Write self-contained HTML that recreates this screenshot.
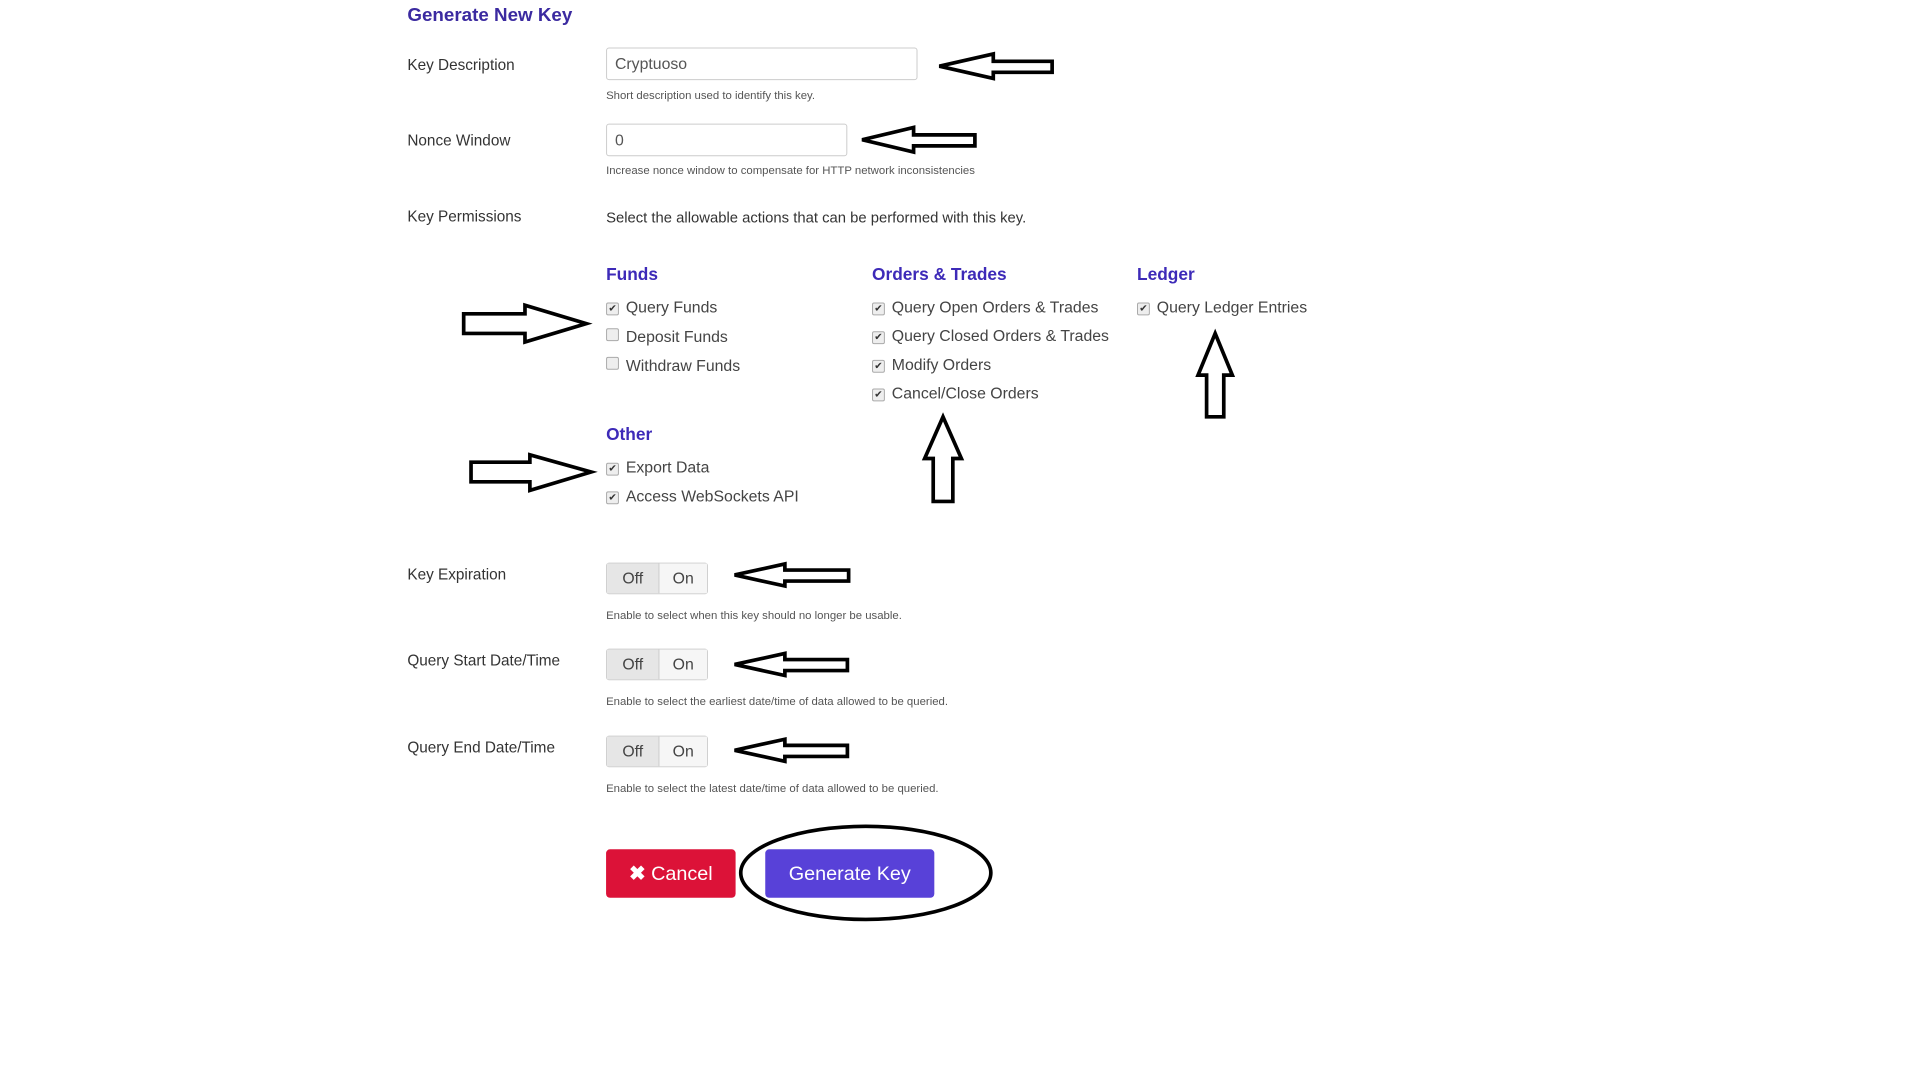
<!DOCTYPE html>
<html><head><style>
body{margin:0;width:1920px;height:1080px;background:#fff;font-family:"Liberation Sans",sans-serif;color:#333;position:relative;overflow:hidden}
#w{position:absolute;left:0;top:0;width:1920px;height:1080px;transform:scale(0.9887);transform-origin:0 0}
.a{position:absolute;white-space:nowrap}
.t{position:absolute;left:0;top:3px;width:1920px;height:1080px}
.title{left:412px;top:2px;font-size:19px;font-weight:bold;color:#3b2aa0}
.lbl{left:412px;font-size:15.5px;color:#333}
.inp{position:absolute;border:1px solid #ccc;border-radius:3px;font-size:16px;color:#555;padding-left:8px;box-sizing:border-box;line-height:33px}
.help{font-size:11.5px;color:#555;left:613px}
.h{font-size:17.5px;font-weight:bold;color:#3d2ab8}
.cb{font-size:16px;color:#444}
.cb i{display:inline-block;width:11px;height:11px;border:1px solid #aaa;border-radius:2px;background:#eee;margin-right:7px;vertical-align:1px;font-style:normal;font-size:10px;line-height:11px;text-align:center;color:#333}
.tg{position:absolute;left:613px;width:103px;height:32px;border:1px solid #ccc;border-radius:3px;box-sizing:border-box;display:flex;font-size:16px;color:#444}
.tg span{flex:1;text-align:center;line-height:31px}
.tg span:first-child{background:#e6e6e6;border-right:1px solid #ccc;flex:0 0 52px}
.tg span:last-child{background:#f6f6f6}
.btn{position:absolute;top:859px;height:49px;border-radius:4px;color:#fff;font-size:20px;text-align:center;line-height:50px}
</style></head><body><div id="w">
<div class="inp" style="left:613px;top:48px;width:315px;height:33px">Cryptuoso</div>
<div class="inp" style="left:613px;top:125px;width:244px;height:33px">0</div>
<div class="tg" style="top:569px"><span>Off</span><span>On</span></div>
<div class="tg" style="top:656px"><span>Off</span><span>On</span></div>
<div class="tg" style="top:744px"><span>Off</span><span>On</span></div>
<div class="btn" style="left:613px;width:131px;background:#dc1238"><b>✖</b> Cancel</div>
<div class="btn" style="left:774px;width:171px;background:#5841d8">Generate Key</div>

<div class="t">
<div class="a title">Generate New Key</div>
<div class="a lbl" style="top:55px">Key Description</div>
<div class="a help" style="top:88px">Short description used to identify this key.</div>
<div class="a lbl" style="top:131px">Nonce Window</div>
<div class="a help" style="top:164px">Increase nonce window to compensate for HTTP network inconsistencies</div>
<div class="a lbl" style="top:208px">Key Permissions</div>
<div class="a" style="left:613px;top:209px;font-size:15px;color:#333">Select the allowable actions that can be performed with this key.</div>

<div class="a h" style="left:613px;top:264px">Funds</div>
<div class="a h" style="left:882px;top:264px">Orders &amp; Trades</div>
<div class="a h" style="left:1150px;top:264px">Ledger</div>

<div class="a cb" style="left:613px;top:300px"><i>✔</i>Query Funds</div>
<div class="a cb" style="left:613px;top:329px"><i></i>Deposit Funds</div>
<div class="a cb" style="left:613px;top:358px"><i></i>Withdraw Funds</div>

<div class="a cb" style="left:882px;top:300px"><i>✔</i>Query Open Orders &amp; Trades</div>
<div class="a cb" style="left:882px;top:329px"><i>✔</i>Query Closed Orders &amp; Trades</div>
<div class="a cb" style="left:882px;top:358px"><i>✔</i>Modify Orders</div>
<div class="a cb" style="left:882px;top:387px"><i>✔</i>Cancel/Close Orders</div>

<div class="a cb" style="left:1150px;top:300px"><i>✔</i>Query Ledger Entries</div>

<div class="a h" style="left:613px;top:426px">Other</div>
<div class="a cb" style="left:613px;top:462px"><i>✔</i>Export Data</div>
<div class="a cb" style="left:613px;top:491px"><i>✔</i>Access WebSockets API</div>

<div class="a lbl" style="top:570px">Key Expiration</div>
<div class="a help" style="top:614px">Enable to select when this key should no longer be usable.</div>
<div class="a lbl" style="top:657px">Query Start Date/Time</div>
<div class="a help" style="top:701px">Enable to select the earliest date/time of data allowed to be queried.</div>
<div class="a lbl" style="top:745px">Query End Date/Time</div>
<div class="a help" style="top:789px">Enable to select the latest date/time of data allowed to be queried.</div>
</div>

<svg class="a" style="left:0;top:0" width="1920" height="1080" viewBox="0 0 1548 871" fill="none" stroke="#000" stroke-width="3" stroke-linejoin="miter">
<g>
<polygon points="766,54 810,44 810,50 858,50 858,59 810,59 810,64"/>
<polygon points="703,114 745,104 745,110 795,110 795,119 745,119 745,124"/>
<polygon points="599,469 640,460 640,465 692,465 692,474 640,474 640,478"/>
<polygon points="599,542 640,533 640,538 691,538 691,547 640,547 640,551"/>
<polygon points="599,612 640,603 640,608 691,608 691,617 640,617 640,621"/>
<polygon points="478,264 428,249 428,256 378,256 378,272 428,272 428,279"/>
<polygon points="482,385 432,371 432,377 384,377 384,393 432,393 432,400"/>
<polygon points="769,340 784,374 777,374 777,409 761,409 761,374 754,374"/>
<polygon points="991,272 1005,306 998,306 998,340 984,340 984,306 977,306"/>
<ellipse cx="706" cy="712" rx="102" ry="38"/>
</g>
</svg>
</div></body></html>
